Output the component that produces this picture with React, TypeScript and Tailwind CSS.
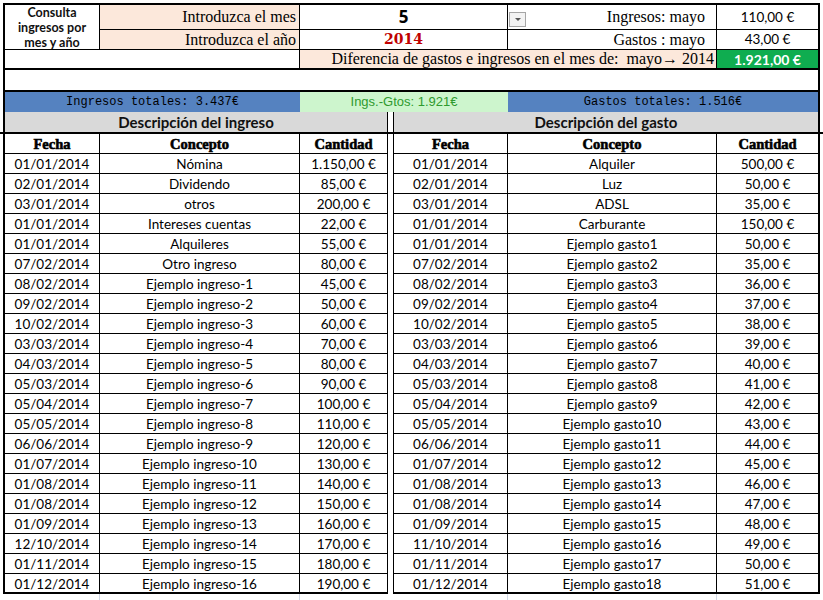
import React from "react";

const ingresos: [string, string, string][] = [
  ["01/01/2014", "Nómina", "1.150,00 €"],
  ["02/01/2014", "Dividendo", "85,00 €"],
  ["03/01/2014", "otros", "200,00 €"],
  ["01/01/2014", "Intereses cuentas", "22,00 €"],
  ["01/01/2014", "Alquileres", "55,00 €"],
  ["07/02/2014", "Otro ingreso", "80,00 €"],
  ["08/02/2014", "Ejemplo ingreso-1", "45,00 €"],
  ["09/02/2014", "Ejemplo ingreso-2", "50,00 €"],
  ["10/02/2014", "Ejemplo ingreso-3", "60,00 €"],
  ["03/03/2014", "Ejemplo ingreso-4", "70,00 €"],
  ["04/03/2014", "Ejemplo ingreso-5", "80,00 €"],
  ["05/03/2014", "Ejemplo ingreso-6", "90,00 €"],
  ["05/04/2014", "Ejemplo ingreso-7", "100,00 €"],
  ["05/05/2014", "Ejemplo ingreso-8", "110,00 €"],
  ["06/06/2014", "Ejemplo ingreso-9", "120,00 €"],
  ["01/07/2014", "Ejemplo ingreso-10", "130,00 €"],
  ["01/08/2014", "Ejemplo ingreso-11", "140,00 €"],
  ["01/08/2014", "Ejemplo ingreso-12", "150,00 €"],
  ["01/09/2014", "Ejemplo ingreso-13", "160,00 €"],
  ["12/10/2014", "Ejemplo ingreso-14", "170,00 €"],
  ["01/11/2014", "Ejemplo ingreso-15", "180,00 €"],
  ["01/12/2014", "Ejemplo ingreso-16", "190,00 €"],
];

const gastos: [string, string, string][] = [
  ["01/01/2014", "Alquiler", "500,00 €"],
  ["02/01/2014", "Luz", "50,00 €"],
  ["03/01/2014", "ADSL", "35,00 €"],
  ["01/01/2014", "Carburante", "150,00 €"],
  ["01/01/2014", "Ejemplo gasto1", "50,00 €"],
  ["07/02/2014", "Ejemplo gasto2", "35,00 €"],
  ["08/02/2014", "Ejemplo gasto3", "36,00 €"],
  ["09/02/2014", "Ejemplo gasto4", "37,00 €"],
  ["10/02/2014", "Ejemplo gasto5", "38,00 €"],
  ["03/03/2014", "Ejemplo gasto6", "39,00 €"],
  ["04/03/2014", "Ejemplo gasto7", "40,00 €"],
  ["05/03/2014", "Ejemplo gasto8", "41,00 €"],
  ["05/04/2014", "Ejemplo gasto9", "42,00 €"],
  ["05/05/2014", "Ejemplo gasto10", "43,00 €"],
  ["06/06/2014", "Ejemplo gasto11", "44,00 €"],
  ["01/07/2014", "Ejemplo gasto12", "45,00 €"],
  ["01/08/2014", "Ejemplo gasto13", "46,00 €"],
  ["01/08/2014", "Ejemplo gasto14", "47,00 €"],
  ["01/09/2014", "Ejemplo gasto15", "48,00 €"],
  ["11/10/2014", "Ejemplo gasto16", "49,00 €"],
  ["01/11/2014", "Ejemplo gasto17", "50,00 €"],
  ["01/12/2014", "Ejemplo gasto18", "51,00 €"],
];

function DataTable({
  rows,
  cols,
  outer,
}: {
  rows: [string, string, string][];
  cols: string;
  outer: string;
}) {
  return (
    <div className={outer}>
      <div className={`grid ${cols} h-[20px] border-b border-black font-['Liberation_Serif',serif] font-bold text-[14.5px] [-webkit-text-stroke:0.6px_black]`}>
        <div className="flex items-center justify-center border-r border-black">Fecha</div>
        <div className="flex items-center justify-center border-r border-black">Concepto</div>
        <div className="flex items-center justify-center">Cantidad</div>
      </div>
      {rows.map((r, i) => (
        <div
          key={i}
          className={`grid ${cols} h-[20px] border-black font-['Lato',sans-serif] text-[13.5px] ${
            i === rows.length - 1 ? "border-b-2" : "border-b"
          }`}
        >
          <div className="flex items-center justify-center border-r border-black">{r[0]}</div>
          <div className="flex items-center justify-center border-r border-black">{r[1]}</div>
          <div className="flex items-center justify-center">{r[2]}</div>
        </div>
      ))}
    </div>
  );
}

export default function App() {
  const serif = "font-['Liberation_Serif',serif] text-[16px]";
  return (
    <div className="relative w-[823px] h-[600px] bg-white overflow-hidden text-black">
      <div className="pt-[3px] pl-[3px]">
        {/* top block */}
        <div className="w-[817px] border-2 border-black grid grid-cols-[95px_200px_208px_209px_101px] grid-rows-[25px_20px_18px]">
          <div className="row-span-2 border-r border-b border-black flex flex-col items-center justify-center font-['Lato',sans-serif] font-bold text-[12.5px] leading-[15px] text-center text-[#111]">
            <span>Consulta</span>
            <span>ingresos por</span>
            <span>mes y año</span>
          </div>
          <div className={`bg-[#fce8db] border-r border-b border-black flex items-center justify-end pr-[3px] ${serif}`}>
            Introduzca el mes
          </div>
          <div className="border-r border-b border-black flex items-center justify-center font-['Open_Sans',sans-serif] font-bold text-[17px]">
            5
          </div>
          <div className={`border-r border-b border-black flex items-center justify-end pr-[11px] ${serif}`}>
            Ingresos: mayo
          </div>
          <div className="border-b border-black flex items-center justify-center font-['Lato',sans-serif] text-[13.5px]">
            110,00 €
          </div>

          <div className={`bg-[#fce8db] border-r border-b border-black flex items-center justify-end pr-[3px] ${serif}`}>
            Introduzca el año
          </div>
          <div className="border-r border-b border-black flex items-center justify-center font-['DejaVu_Serif',serif] font-bold text-[14px] text-[#c00000]">
            2014
          </div>
          <div className={`border-r border-b border-black flex items-center justify-end pr-[11px] ${serif}`}>
            Gastos : mayo
          </div>
          <div className="border-b border-black flex items-center justify-center font-['Lato',sans-serif] text-[13.5px]">
            43,00 €
          </div>

          <div className="col-span-2 border-r border-black bg-white" />
          <div className={`col-span-2 bg-[#fce8db] border-r border-black flex items-center justify-end pr-[2px] whitespace-nowrap ${serif}`}>
            Diferencia de gastos e ingresos en el mes de:&nbsp; mayo→ 2014
          </div>
          <div className="bg-[#0fad50] flex items-center justify-center font-['Lato',sans-serif] font-bold text-[14px] text-white">
            1.921,00 €
          </div>
        </div>

        {/* blank row */}
        <div className="w-[817px] h-[22px] border-l-2 border-r-2 border-b-2 border-black" />

        {/* totals row */}
        <div className="w-[817px] h-[20px] border-l-2 border-r-2 border-black flex">
          <div className="w-[295px] bg-[#5582c0] flex items-center justify-center font-['Liberation_Mono',monospace] text-[12px] text-black">
            Ingresos totales: 3.437€
          </div>
          <div className="w-[208px] bg-[#cdf5cd] flex items-center justify-center font-['Liberation_Sans',sans-serif] text-[13px] text-[#2f9a2f]">
            Ings.-Gtos: 1.921€
          </div>
          <div className="w-[310px] bg-[#5582c0] flex items-center justify-center font-['Liberation_Mono',monospace] text-[12px] text-black">
            Gastos totales: 1.516€
          </div>
        </div>

        {/* descripcion row */}
        <div className="flex h-[20px] font-['Lato',sans-serif] font-bold text-[15px] text-[#111]">
          <div className="w-[385px] bg-[#d9d9d9] border-l-2 border-r border-black flex items-center justify-center">
            Descripción del ingreso
          </div>
          <div className="w-[5px]" />
          <div className="w-[427px] bg-[#d9d9d9] border-l border-r-2 border-black flex items-center justify-center">
            Descripción del gasto
          </div>
        </div>
      </div>

      <div className="w-[823px] h-[2px] bg-black" />

      <div className="flex pl-[3px]">
        <DataTable
          rows={ingresos}
          cols="grid-cols-[95px_200px_87px]"
          outer="w-[385px] border-l-2 border-r border-black"
        />
        <div className="w-[5px]" />
        <DataTable
          rows={gastos}
          cols="grid-cols-[114px_209px_101px]"
          outer="w-[427px] border-l border-r-2 border-black"
        />
      </div>

      {/* faint gridlines below tables */}
      <div className="flex pl-[3px] h-[8px]">
        <div className="w-[97px] border-r border-[#d0d7e5]" />
        <div className="w-[200px] border-r border-[#d0d7e5]" />
        <div className="w-[208px] border-r border-[#d0d7e5]" />
        <div className="w-[209px] border-r border-[#d0d7e5]" />
      </div>

      {/* dropdown button overlay */}
      <div className="absolute left-[509px] top-[12px] w-[17px] h-[15px] border border-[#a6a6a6] bg-[#f3f3f3] flex items-center justify-center">
        <div className="w-0 h-0 border-l-[3px] border-r-[3px] border-t-[3px] border-l-transparent border-r-transparent border-t-[#555]" />
      </div>
    </div>
  );
}
